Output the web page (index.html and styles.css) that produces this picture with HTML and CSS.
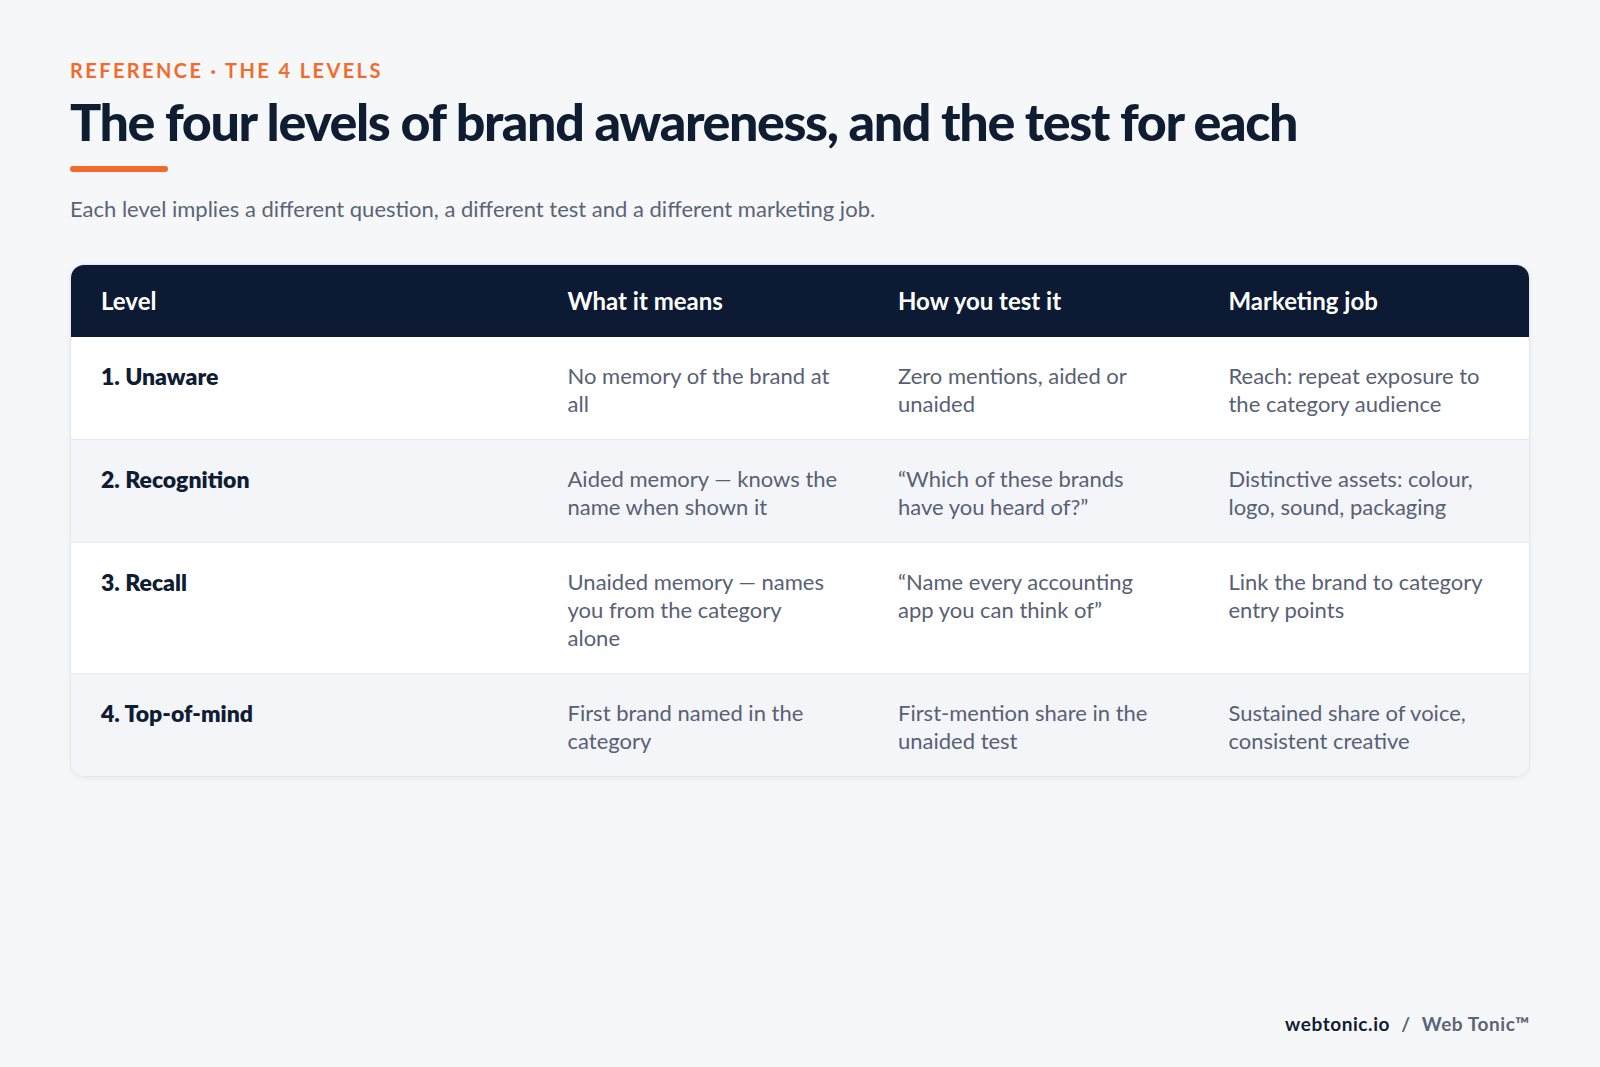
FILE: index.html
```html
<!DOCTYPE html>
<html lang="en">
<head>
<meta charset="utf-8">
<title>The four levels of brand awareness</title>
<link rel="stylesheet" href="styles.css">
</head>
<body>
<div class="page">
  <div class="eyebrow">REFERENCE · THE 4 LEVELS</div>
  <h1 class="title">The four levels of brand awareness, and the test for each</h1>
  <div class="rule"></div>
  <p class="lede">Each level implies a different question, a different test and a different marketing job.</p>

  <div class="card">
    <table class="grid">
      <colgroup>
        <col class="c-level">
        <col class="c-other">
        <col class="c-other">
        <col class="c-other">
      </colgroup>
      <thead>
        <tr>
          <th>Level</th>
          <th>What it means</th>
          <th>How you test it</th>
          <th>Marketing job</th>
        </tr>
      </thead>
      <tbody>
        <tr>
          <td class="lvl">1. Unaware</td>
          <td>No memory of the brand at all</td>
          <td>Zero mentions, aided or unaided</td>
          <td>Reach: repeat exposure to the category audience</td>
        </tr>
        <tr>
          <td class="lvl">2. Recognition</td>
          <td>Aided memory — knows the name when shown it</td>
          <td>“Which of these brands have you heard of?”</td>
          <td>Distinctive assets: colour, logo, sound, packaging</td>
        </tr>
        <tr>
          <td class="lvl">3. Recall</td>
          <td>Unaided memory — names you from the category alone</td>
          <td>“Name every accounting app you can think of”</td>
          <td>Link the brand to category entry points</td>
        </tr>
        <tr>
          <td class="lvl">4. Top-of-mind</td>
          <td>First brand named in the category</td>
          <td>First-mention share in the unaided test</td>
          <td>Sustained share of voice, consistent creative</td>
        </tr>
      </tbody>
    </table>
  </div>

  <div class="footer">
    <span class="site">webtonic.io</span>
    <span class="sep">/</span>
    <span class="brand">Web Tonic™</span>
  </div>
</div>
</body>
</html>
```

FILE: styles.css
```css
* { box-sizing: border-box; }

html, body {
  margin: 0;
  padding: 0;
}

body {
  background: #f6f7f9;
  font-family: Lato, "Open Sans", "Liberation Sans", sans-serif;
  color: #0f1d33;
}

.page {
  min-height: 1067px;
  padding: 58px 70px 32px;
  display: flex;
  flex-direction: column;
}

.eyebrow {
  font-size: 20px;
  line-height: 24px;
  font-weight: 700;
  letter-spacing: 0.12em;
  color: #f26b2d;
}

.title {
  margin: 11px 0 0;
  font-size: 52px;
  line-height: 1.1;
  font-weight: 900;
  letter-spacing: -0.027em;
  color: #0f1d33;
}

.rule {
  margin-top: 16px;
  width: 98px;
  height: 6px;
  border-radius: 3px;
  background: #f26b2d;
}

.lede {
  margin: 20px 0 0;
  font-size: 22px;
  line-height: 33px;
  color: #5a6478;
}

.card {
  margin-top: 39px;
  background: #ffffff;
  border: 1px solid #e3e7ed;
  border-radius: 14px;
  overflow: hidden;
  box-shadow: 0 2px 6px rgba(15, 29, 51, 0.05);
}

.grid {
  width: 100%;
  border-collapse: collapse;
  table-layout: fixed;
}

.c-level { width: 32%; }
.c-other { width: 22.67%; }

.grid th {
  background: #0c1b33;
  color: #ffffff;
  text-align: left;
  font-size: 24px;
  line-height: 24px;
  font-weight: 700;
  padding: 24px 30px;
}

.grid td {
  vertical-align: top;
  padding: 25px 30px 21px;
  font-size: 22px;
  line-height: 28px;
  color: #586174;
  border-top: 1px solid #e6e9ef;
}

.grid tbody tr:first-child td { border-top: none; }

.grid tbody tr:nth-child(even) td { background: #f3f5f9; }

.grid td.lvl {
  font-size: 23px;
  font-weight: 800;
  color: #0f1d33;
}

.footer {
  margin-top: auto;
  align-self: flex-end;
  font-size: 19px;
  font-weight: 700;
  letter-spacing: 0.03em;
}

.site { color: #0f1d33; }
.sep { color: #5a6478; margin: 0 6px; }
.brand { color: #5a6478; }
```
